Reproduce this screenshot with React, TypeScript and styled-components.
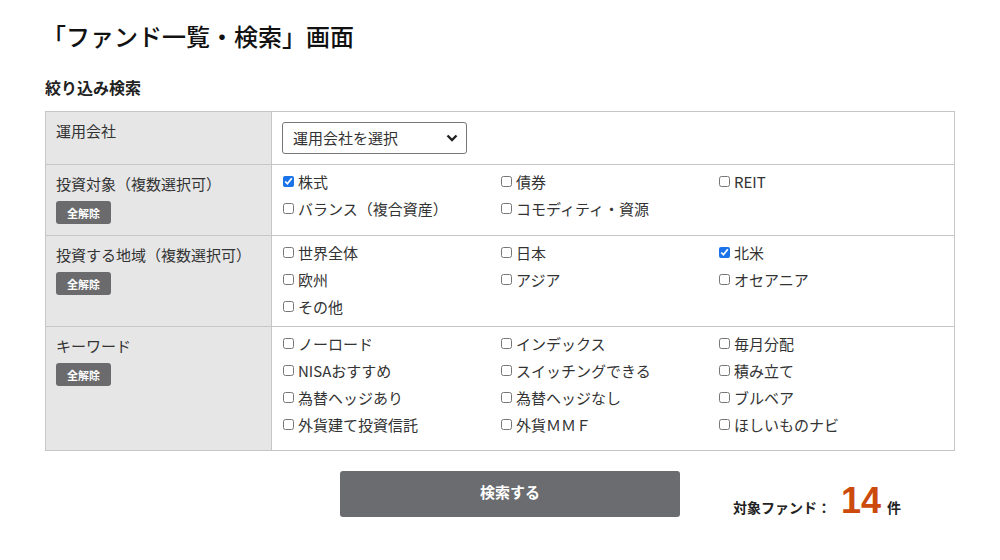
import React from 'react';
import styled, { createGlobalStyle } from 'styled-components';

const GlobalStyle = createGlobalStyle`
  body {
    margin: 0;
    background: #fff;
    color: #333;
    font-family: "Noto Sans CJK JP", "Noto Sans", sans-serif;
  }
`;

const Page = styled.div`
  width: 910px;
  padding: 20px 0 0 45px;
`;

const Title = styled.h1`
  margin: 0 0 0 -3px;
  font-size: 24px;
  line-height: 32px;
  font-weight: 500;
  color: #111;
`;

const SubTitle = styled.h2`
  margin: 23px 0 12px;
  font-size: 16px;
  line-height: 24px;
  font-weight: 700;
  color: #222;
`;

const Table = styled.div`
  display: grid;
  grid-template-columns: 226px 1fr;
  border-top: 1px solid #c6c6c6;
  border-left: 1px solid #c6c6c6;
`;

const LabelCell = styled.div`
  background: #e6e6e6;
  border-right: 1px solid #c6c6c6;
  border-bottom: 1px solid #c6c6c6;
  padding: 8px 10px 11px;
  font-size: 15px;
  line-height: 22px;
  color: #333;
`;

const ValueCell = styled.div<{ $padBottom?: number; $select?: boolean }>`
  border-right: 1px solid #c6c6c6;
  border-bottom: 1px solid #c6c6c6;
  padding: ${p => (p.$select ? '10px 10px' : `3px 10px ${p.$padBottom ?? 6}px`)};
`;

const ClearButton = styled.button`
  display: block;
  margin-top: 6px;
  width: 55px;
  height: 23px;
  border: none;
  border-radius: 3px;
  background: #6b6b6d;
  color: #fff;
  font-family: inherit;
  font-size: 11px;
  font-weight: 700;
  padding: 0;
  cursor: pointer;
`;

const SelectWrap = styled.div`
  position: relative;
  width: 185px;
`;

const Select = styled.select`
  appearance: none;
  width: 185px;
  height: 32px;
  border: 1px solid #767676;
  border-radius: 3px;
  background: #fff;
  padding: 0 30px 2px 10px;
  font-family: inherit;
  font-size: 15px;
  color: #333;
`;

const Chevron = styled.svg`
  position: absolute;
  right: 9px;
  top: 12px;
  pointer-events: none;
`;

const CheckGrid = styled.div`
  display: grid;
  grid-template-columns: repeat(3, 218px);
`;

const CheckItem = styled.label`
  display: flex;
  align-items: center;
  gap: 4px;
  height: 27px;
  font-size: 15px;
  color: #333;
  white-space: nowrap;
`;

const Box = styled.input`
  width: 11px;
  height: 11px;
  margin: 0 0 0 1px;
  accent-color: #1a73e8;
`;

const Footer = styled.div`
  display: flex;
  align-items: center;
  gap: 53px;
  padding: 18px 0 0 295px;
`;

const SearchButton = styled.button`
  width: 340px;
  height: 46px;
  border: none;
  border-radius: 3px;
  background: #6b6c70;
  color: #fff;
  font-family: inherit;
  font-size: 15px;
  font-weight: 700;
  padding: 0 0 5px;
  cursor: pointer;
`;

const Count = styled.div`
  display: flex;
  align-items: baseline;
  gap: 6px;
  padding-top: 14px;
  font-size: 14px;
  font-weight: 700;
  color: #222;
`;

const CountNumber = styled.span`
  margin-left: 4px;
  font-family: "Liberation Sans", Arial, sans-serif;
  font-size: 36px;
  line-height: 1;
  font-weight: 700;
  color: #cc4a0c;
`;

type Option = { label: string; checked?: boolean };

const Checks = ({ items }: { items: Option[] }) => (
  <CheckGrid>
    {items.map(item => (
      <CheckItem key={item.label}>
        <Box type="checkbox" defaultChecked={item.checked} />
        {item.label}
      </CheckItem>
    ))}
  </CheckGrid>
);

const assetTypes: Option[] = [
  { label: '株式', checked: true },
  { label: '債券' },
  { label: 'REIT' },
  { label: 'バランス（複合資産）' },
  { label: 'コモディティ・資源' },
];

const regions: Option[] = [
  { label: '世界全体' },
  { label: '日本' },
  { label: '北米', checked: true },
  { label: '欧州' },
  { label: 'アジア' },
  { label: 'オセアニア' },
  { label: 'その他' },
];

const keywords: Option[] = [
  { label: 'ノーロード' },
  { label: 'インデックス' },
  { label: '毎月分配' },
  { label: 'NISAおすすめ' },
  { label: 'スイッチングできる' },
  { label: '積み立て' },
  { label: '為替ヘッジあり' },
  { label: '為替ヘッジなし' },
  { label: 'ブルベア' },
  { label: '外貨建て投資信託' },
  { label: '外貨ＭＭＦ' },
  { label: 'ほしいものナビ' },
];

export default function App() {
  return (
    <>
      <GlobalStyle />
      <Page>
        <Title>「ファンド一覧・検索」画面</Title>
        <SubTitle>絞り込み検索</SubTitle>
        <Table>
          <LabelCell>運用会社</LabelCell>
          <ValueCell $select>
            <SelectWrap>
              <Select defaultValue="">
                <option value="">運用会社を選択</option>
              </Select>
              <Chevron width="12" height="8" viewBox="0 0 12 8">
                <path d="M1.5 1.5 L6 6 L10.5 1.5" fill="none" stroke="#222" strokeWidth="2.4" />
              </Chevron>
            </SelectWrap>
          </ValueCell>

          <LabelCell>
            投資対象（複数選択可）
            <ClearButton>全解除</ClearButton>
          </LabelCell>
          <ValueCell>
            <Checks items={assetTypes} />
          </ValueCell>

          <LabelCell>
            投資する地域（複数選択可）
            <ClearButton>全解除</ClearButton>
          </LabelCell>
          <ValueCell>
            <Checks items={regions} />
          </ValueCell>

          <LabelCell>
            キーワード
            <ClearButton>全解除</ClearButton>
          </LabelCell>
          <ValueCell $padBottom={12}>
            <Checks items={keywords} />
          </ValueCell>
        </Table>
        <Footer>
          <SearchButton>検索する</SearchButton>
          <Count>
            対象ファンド：
            <CountNumber>14</CountNumber>
            件
          </Count>
        </Footer>
      </Page>
    </>
  );
}
